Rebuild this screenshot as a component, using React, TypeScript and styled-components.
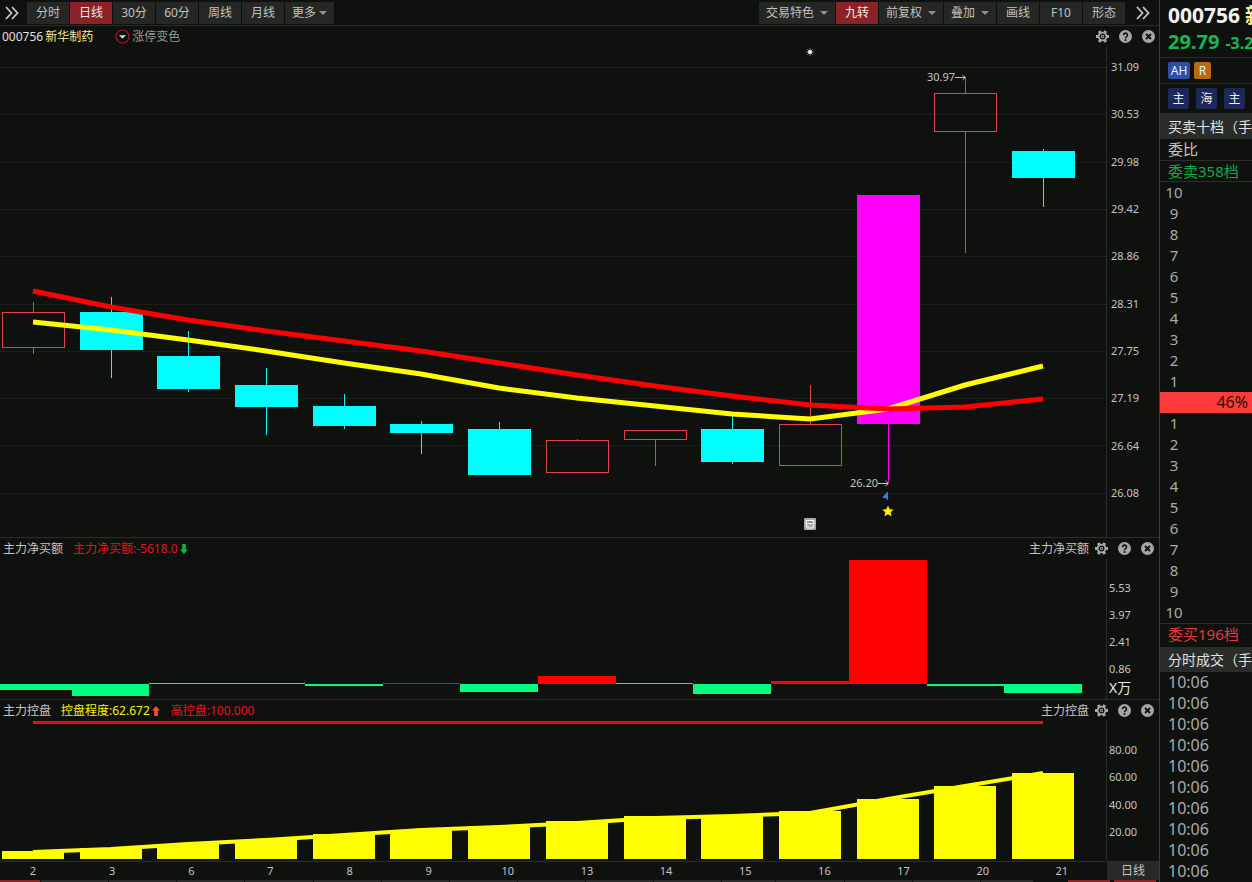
import React from "react";
import styled, { createGlobalStyle, css } from "styled-components";

const GlobalStyle = createGlobalStyle`
  * { box-sizing: border-box; }
  html, body { margin: 0; background: #0f110e; }
  body, button {
    font-family: "Noto Sans", "Noto Sans CJK SC", sans-serif;
    font-size: 12px;
    line-height: 16px;
  }
  button { border: 0; padding: 0; background: none; color: inherit; cursor: pointer; }
  ul, ol, h1, h2 { margin: 0; padding: 0; list-style: none; font-weight: 400; }
`;

const Page = styled.div`
  display: grid;
  grid-template-columns: minmax(0, 1fr) 93px;
  height: 100vh;
  overflow: hidden;
  background: #0f110e;
  color: #c4c4c4;
  white-space: nowrap;
`;

const Main = styled.main`
  display: flex;
  flex-direction: column;
  min-height: 0;
`;

/* ---------- toolbar ---------- */

const Toolbar = styled.nav`
  display: flex;
  justify-content: space-between;
  flex: none;
  height: 26px;
  padding: 2px 9px 1px 5px;
  border-bottom: 1px solid #2a2c2a;
`;

const TabGroup = styled.div<{ $gap: number }>`
  display: flex;
  align-items: center;
  gap: ${(p) => p.$gap}px;
`;

const Tabs = styled.div`
  display: flex;
  gap: 1px;
`;

const Tab = styled.button<{ $active?: boolean; $menu?: boolean }>`
  display: flex;
  align-items: center;
  justify-content: center;
  gap: ${(p) => (p.$menu ? 6 : 0)}px;
  min-width: 42px;
  height: 22px;
  padding: 0 ${(p) => (p.$menu ? 7 : 0)}px;
  background: ${(p) => (p.$active ? "#8a2327" : "#252725")};
  color: ${(p) => (p.$active ? "#f4e6e6" : "#c0c0c0")};
`;

const TightTab = styled(Tab)`
  gap: 3px;
`;

const Caret = styled.span`
  border: 4px solid transparent;
  border-top-color: #8f918f;
  border-bottom: 0;
`;

const MoreButton = styled.button`
  display: flex;
  color: #c8c8c8;
`;

/* ---------- panels ---------- */

const Panel = styled.section<{ $weight: number; $divided?: boolean }>`
  display: flex;
  flex-direction: column;
  flex: ${(p) => p.$weight} 1 0;
  min-height: 0;
  ${(p) => p.$divided && css`border-top: 1px solid #2a2c2a;`}
`;

const PanelHeader = styled.header<{ $right: number; $left: number }>`
  display: flex;
  align-items: center;
  flex: none;
  height: 21px;
  padding: 0 ${(p) => p.$right}px 0 ${(p) => p.$left}px;
`;

const Reading = styled.span<{ $color: string; $before?: number }>`
  display: flex;
  align-items: center;
  gap: 2px;
  margin-left: ${(p) => p.$before ?? 0}px;
  color: ${(p) => p.$color};
`;

const Tools = styled.div`
  display: flex;
  align-items: center;
  gap: 10px;
  margin-left: auto;
  color: #a6a6a6;
`;

const ToolTitle = styled.span`
  margin-right: -4px;
  color: #c4c4c4;
`;

const IconButton = styled.button`
  display: flex;
`;

const PanelBody = styled.div`
  display: flex;
  flex: 1;
  min-height: 0;
`;

const Plot = styled.div`
  position: relative;
  flex: 1;
  min-width: 0;
  min-height: 0;
`;

const Chart = styled.svg`
  display: block;
  width: 100%;
  height: 100%;
`;

const Axis = styled.div<{ $top: number; $bottom: number; $left: number }>`
  display: flex;
  flex-direction: column;
  justify-content: space-between;
  flex: none;
  width: 53px;
  padding: ${(p) => p.$top}px 0 ${(p) => p.$bottom}px ${(p) => p.$left}px;
  border-left: 1px solid #2a2c2a;
  font-size: 11px;
`;

const AxisUnit = styled.span`
  color: #e6e6e6;
  font-size: 14px;
  margin-top: -8px;
`;

const Marker = styled.span`
  position: absolute;
  display: flex;
  transform: translate(-50%, -50%);
`;

const PriceTag = styled.span`
  position: absolute;
  display: flex;
  align-items: center;
  font-size: 11px;
  transform: translateY(-50%);
`;

const DateRow = styled.div`
  display: flex;
  flex: none;
  height: 19px;
  border-top: 1px solid #2a2c2a;
  font-size: 11px;
`;

const Dates = styled.div`
  display: flex;
  justify-content: space-between;
  align-items: center;
  flex: 1;
  padding: 0 35px 0 23px;
`;

const DateLabel = styled.span`
  width: 20px;
  text-align: center;
`;

const PeriodButton = styled.button`
  width: 52px;
  background: #272927;
`;

const Strip = styled.div`
  display: flex;
  gap: 1px;
  flex: none;
  height: 2px;
`;

const StripItem = styled.span<{ $w: number; $tone: "red" | "grey" | "none" }>`
  flex: ${(p) => p.$w} 1 0;
  background: ${(p) => ({ red: "#8a2327", grey: "#2b2d2b", none: "transparent" })[p.$tone]};
`;

/* ---------- quote sidebar ---------- */

const Side = styled.aside`
  min-height: 0;
  overflow: hidden;
  border-left: 1px solid #3a3c3a;
`;

const Quote = styled.div`
  height: 58px;
  padding: 2px 0 0 8px;
  border-bottom: 1px solid #2a2c2a;
`;

const Code = styled.h1`
  display: flex;
  gap: 5px;
  color: #f2f2f2;
  font-size: 21px;
  font-weight: 700;
  line-height: 26px;
`;

const StockName = styled.span`
  color: #ffee9a;
`;

const Last = styled.div`
  display: flex;
  align-items: baseline;
  gap: 6px;
  color: #13b850;
  font-size: 20px;
  font-weight: 700;
  line-height: 28px;
`;

const Change = styled.span`
  font-size: 16px;
`;

const BadgeRow = styled.div<{ $h: number; $gap: number }>`
  display: flex;
  align-items: center;
  gap: ${(p) => p.$gap}px;
  height: ${(p) => p.$h}px;
  padding-left: 8px;
  border-bottom: 1px solid #2a2c2a;
`;

const Badge = styled.span<{ $bg: string; $w: number; $h: number }>`
  display: flex;
  flex: none;
  align-items: center;
  justify-content: center;
  width: ${(p) => p.$w}px;
  height: ${(p) => p.$h}px;
  border-radius: 2px;
  background: ${(p) => p.$bg};
  color: #eeeeee;
`;

const SideTitle = styled.h2`
  height: 25px;
  padding-left: 8px;
  background: #2a2c2a;
  color: #e2e2e2;
  font-size: 14px;
  line-height: 26px;
`;

const SideLine = styled.div<{ $color: string; $h: number; $rule?: "top" | "bottom" }>`
  height: ${(p) => p.$h}px;
  padding-left: 8px;
  color: ${(p) => p.$color};
  font-size: 15px;
  line-height: 21px;
  ${(p) => p.$rule && css`border-${p.$rule}: 1px solid #2a2c2a;`}
`;

const Levels = styled.ol`
  color: #a9aba9;
  font-size: 15px;
  line-height: 21px;
`;

const Level = styled.li`
  width: 28px;
  text-align: center;
`;

const Ratio = styled.div`
  height: 21px;
  padding-right: 4px;
  background: #ff3c3c;
  color: #2a0c0c;
  font-size: 16px;
  line-height: 21px;
  text-align: right;
`;

const Trades = styled.ul`
  padding-left: 8px;
  color: #a9aba9;
  font-size: 16px;
  line-height: 21px;
`;

/* ---------- icons ---------- */

const DoubleChevron = () => (
  <svg width="14" height="14" viewBox="0 0 14 14" fill="none" stroke="currentColor" strokeWidth="1.8">
    <path d="M1 1l5.500 6L1 13M7 1l5.500 6L7 13" />
  </svg>
);

const GearIcon = () => (
  <svg width="13" height="13" viewBox="0 0 13 13">
    <path
      stroke="currentColor"
      strokeWidth="3"
      d="M0 6.500h13M3.200 .9l6.600 11.200M9.800 .9L3.200 12.100"
    />
    <circle cx="6.500" cy="6.500" r="4.800" fill="currentColor" />
    <circle cx="6.500" cy="6.500" r="2.300" fill="currentColor" stroke="#0f110e" strokeWidth="1.300" />
    <circle cx="6.500" cy="6.500" r=".8" fill="#0f110e" />
  </svg>
);

const HelpIcon = () => (
  <svg width="13" height="13" viewBox="0 0 13 13" fill="none">
    <circle cx="6.500" cy="6.500" r="6.500" fill="currentColor" />
    <path d="M4.500 5.200a2 2 0 1 1 2.900 1.700q-.9.4-.9 1.300" stroke="#0f110e" strokeWidth="1.600" />
    <circle cx="6.500" cy="10" r="1" fill="#0f110e" />
  </svg>
);

const CloseIcon = () => (
  <svg width="13" height="13" viewBox="0 0 13 13">
    <circle cx="6.500" cy="6.500" r="6.500" fill="currentColor" />
    <path d="M4 4l5 5M9 4l-5 5" stroke="#0f110e" strokeWidth="1.900" />
  </svg>
);

const LegendIcon = () => (
  <svg width="15" height="15" viewBox="0 0 15 15">
    <circle cx="7.500" cy="7.500" r="6.500" fill="none" stroke="#a3162f" strokeWidth="1.200" />
    <path d="M4 6.200h7L7.500 9.600z" fill="#d8e6dc" />
  </svg>
);

const TrendArrow = ({ up }: { up?: boolean }) => (
  <svg width="8" height="10" viewBox="0 0 8 10">
    <path
      fill={up ? "#ff4a3c" : "#16b23e"}
      d={up ? "M4 0l4 4.500H5.800V10H2.200V4.500H0z" : "M4 10L0 5.500h2.200V0h3.600v5.500H8z"}
    />
  </svg>
);

const TagArrow = () => (
  <svg width="11" height="7" viewBox="0 0 11 7" fill="none" stroke="#c4c4c4">
    <path d="M0 3.500h10M7.500 1l2.800 2.500L7.500 6" />
  </svg>
);

const PanelTools = ({ title }: { title?: string }) => (
  <Tools>
    {title && <ToolTitle>{title}</ToolTitle>}
    <IconButton aria-label="设置"><GearIcon /></IconButton>
    <IconButton aria-label="帮助"><HelpIcon /></IconButton>
    <IconButton aria-label="关闭"><CloseIcon /></IconButton>
  </Tools>
);

/* ---------- data ---------- */

const W = 1106;
const BODY = 63;

type Kind = "up" | "down" | "limit";
/* left, body top, body bottom, high, low */
const candles: [number, number, number, number, number, Kind][] = [
  [2, 265, 301, 255, 307, "up"],
  [80, 265, 303, 250, 331, "down"],
  [157, 309, 342, 284, 345, "down"],
  [235, 338, 360, 321, 388, "down"],
  [313, 359, 379, 347, 382, "down"],
  [390, 377, 386, 374, 407, "down"],
  [468, 382, 428, 375, 428, "down"],
  [546, 393, 426, 392, 426, "up"],
  [624, 383, 393, 383, 419, "up"],
  [701, 382, 415, 369, 417, "down"],
  [779, 377, 419, 338, 377, "up"],
  [857, 148, 377, 148, 436, "limit"],
  [934, 46, 85, 30, 206, "up"],
  [1012, 104, 131, 102, 160, "down"],
];
const centres = candles.map((c) => c[0] + 31);

const slowMa = [244, 260, 273, 284, 294, 304, 316, 328, 339, 349, 358, 362, 360, 352];
const fastMa = [275, 283, 293, 304, 316, 327, 341, 351, 359, 367, 372, 362, 338, 319];
const toPoints = (ys: number[]) => ys.map((y, i) => `${centres[i]},${y}`).join(" ");

/* x edges of the flow bars and their signed heights */
const flowEdges = [0, 72, 149, 227, 305, 383, 460, 538, 616, 693, 771, 849, 927, 1004, 1082];
const flows = [-6, -12, -1, -1, -2, 1, -8, 8, -1, -10, 3, 124, -2, -9];

const control = [8, 11, 15, 19, 25, 29, 33, 38, 43, 44, 48, 60, 73, 86];
const controlLine = [131, 128, 123, 119, 114, 109, 106, 102, 97, 95, 92, 78, 65, 52];

const dates = [2, 3, 6, 7, 8, 9, 10, 13, 14, 15, 16, 17, 20, 21];
const prices = ["31.09", "30.53", "29.98", "29.42", "28.86", "28.31", "27.75", "27.19", "26.64", "26.08"];
const strip = [40, 67, 67, 67, 67, 67, 67, 67, 67, 67, 67, 53, 67, 67, 67, 52];

const PRICE_H = 490;
const at = (x: number, y: number) => ({ left: `${(x / W) * 100}%`, top: `${(y / PRICE_H) * 100}%` });
const endingAt = (x: number, y: number) => ({ right: `${100 - (x / W) * 100}%`, top: `${(y / PRICE_H) * 100}%` });

const colours: Record<Kind, string> = { up: "#e0424a", down: "#00ffff", limit: "#ff00ff" };

const Candle = ({ c }: { c: (typeof candles)[number] }) => {
  const [x, top, bottom, high, low, kind] = c;
  const mid = x + 31;
  return (
    <g fill={colours[kind]} shapeRendering="crispEdges">
      {top > high && <rect x={mid} y={high} width={1} height={top - high} />}
      {low > bottom && <rect x={mid} y={bottom} width={1} height={low - bottom} />}
      {kind === "up" ? (
        <rect x={x + 0.5} y={top + 0.5} width={BODY - 1} height={bottom - top - 1} fill="none" stroke={colours.up} />
      ) : (
        <rect x={x} y={top} width={BODY} height={bottom - top} />
      )}
    </g>
  );
};

export default function App() {
  return (
    <>
      <GlobalStyle />
      <Page>
        <Main>
          <Toolbar>
            <TabGroup $gap={8}>
              <MoreButton aria-label="展开"><DoubleChevron /></MoreButton>
              <Tabs>
                <Tab>分时</Tab>
                <Tab $active>日线</Tab>
                <Tab>30分</Tab>
                <Tab>60分</Tab>
                <Tab>周线</Tab>
                <Tab>月线</Tab>
                <TightTab $menu>更多<Caret /></TightTab>
              </Tabs>
            </TabGroup>
            <TabGroup $gap={11}>
              <Tabs>
                <Tab $menu>交易特色<Caret /></Tab>
                <Tab $active>九转</Tab>
                <Tab $menu>前复权<Caret /></Tab>
                <Tab $menu>叠加<Caret /></Tab>
                <Tab>画线</Tab>
                <Tab>F10</Tab>
                <Tab>形态</Tab>
              </Tabs>
              <MoreButton aria-label="更多工具"><DoubleChevron /></MoreButton>
            </TabGroup>
          </Toolbar>

          <Panel $weight={511}>
            <PanelHeader $left={2} $right={4}>
              <Reading $color="#e0e0e0">000756</Reading>
              <Reading $color="#f6ec9c" $before={2}>新华制药</Reading>
              <Reading $color="#969896" $before={22}><LegendIcon />涨停变色</Reading>
              <PanelTools />
            </PanelHeader>
            <PanelBody>
              <Plot>
                <Chart viewBox={`0 0 ${W} ${PRICE_H}`} preserveAspectRatio="none">
                  {prices.map((p, i) => (
                    <rect key={p} x={0} y={Math.round(20 + i * 47.3)} width={W} height={1} fill="#1b1d1b" />
                  ))}
                  {candles.map((c) => <Candle key={c[0]} c={c} />)}
                  <polyline points={toPoints(fastMa)} fill="none" stroke="#ffff00" strokeWidth={5} />
                  <polyline points={toPoints(slowMa)} fill="none" stroke="#ff0000" strokeWidth={5} />
                </Chart>
                <PriceTag style={endingAt(966, 30)}>30.97<TagArrow /></PriceTag>
                <PriceTag style={endingAt(889, 436)}>26.20<TagArrow /></PriceTag>
                <Marker style={at(810, 5)}>
                  <svg width="9" height="9" viewBox="0 0 9 9" stroke="#8d8d8d">
                    <path d="M4.500 0v9M0 4.500h9M1.500 1.500l6 6M7.500 1.500l-6 6" strokeWidth=".8" />
                    <circle cx="4.500" cy="4.500" r="2" fill="#f0f0f0" stroke="none" />
                  </svg>
                </Marker>
                <Marker style={at(810, 477)}>
                  <svg width="12" height="12" viewBox="0 0 12 12" fill="none">
                    <rect width="12" height="12" rx="1" fill="#a9a9a9" />
                    <path d="M2 2.500h8v3.500l-1 4H3zM3.500 5.500h4M4.500 8.500L9.500 4" stroke="#ffffff" />
                    <path d="M3.500 4h5M4.500 7h2" stroke="#777777" />
                  </svg>
                </Marker>
                <Marker style={at(885, 449)}>
                  <svg width="6" height="9" viewBox="0 0 6 9">
                    <path d="M6 0v9L3.700 6.800 0 6z" fill="#3f78e0" />
                  </svg>
                </Marker>
                <Marker style={at(888, 464)}>
                  <svg width="12" height="12" viewBox="0 0 12 12">
                    <path d="M6 .5l1.700 3.700 4 .4-3 2.700.9 4L6 9.200l-3.600 2.100.9-4-3-2.700 4-.4z" fill="#ffee00" />
                  </svg>
                </Marker>
              </Plot>
              <Axis $top={12} $bottom={36} $left={4}>
                {prices.map((p) => <span key={p}>{p}</span>)}
              </Axis>
            </PanelBody>
          </Panel>

          <Panel $weight={161} $divided>
            <PanelHeader $left={3} $right={5}>
              <Reading $color="#c4c4c4">主力净买额</Reading>
              <Reading $color="#e0161c" $before={10}>主力净买额:-5618.0<TrendArrow /></Reading>
              <PanelTools title="主力净买额" />
            </PanelHeader>
            <PanelBody>
              <Plot>
                <Chart viewBox={`0 0 ${W} 140`} preserveAspectRatio="none">
                  {flows.map((v, i) => (
                    <rect
                      key={i}
                      x={flowEdges[i]}
                      y={v > 0 ? 125 - v : v === -1 ? 124 : 125}
                      width={flowEdges[i + 1] - flowEdges[i]}
                      height={Math.abs(v)}
                      fill={v > 0 ? "#ff0000" : "#00ff7f"}
                      shapeRendering="crispEdges"
                    />
                  ))}
                </Chart>
              </Plot>
              <Axis $top={21} $bottom={3} $left={2}>
                {["5.53", "3.97", "2.41", "0.86"].map((t) => <span key={t}>{t}</span>)}
                <AxisUnit>X万</AxisUnit>
              </Axis>
            </PanelBody>
          </Panel>

          <Panel $weight={161} $divided>
            <PanelHeader $left={3} $right={5}>
              <Reading $color="#c4c4c4">主力控盘</Reading>
              <Reading $color="#f4f400" $before={10}>控盘程度:62.672<TrendArrow up /></Reading>
              <Reading $color="#e0161c" $before={11}>高控盘:100.000</Reading>
              <PanelTools title="主力控盘" />
            </PanelHeader>
            <PanelBody>
              <Plot>
                <Chart viewBox={`0 0 ${W} 140`} preserveAspectRatio="none">
                  <rect x={33} y={0} width={1010} height={3} fill="#f00a0a" />
                  {control.map((h, i) => (
                    <rect
                      key={i}
                      x={candles[i][0]}
                      y={138 - h}
                      width={BODY - 1}
                      height={h}
                      fill="#ffff00"
                      shapeRendering="crispEdges"
                    />
                  ))}
                  <polyline points={toPoints(controlLine)} fill="none" stroke="#ffff00" strokeWidth={4} />
                </Chart>
              </Plot>
              <Axis $top={21} $bottom={21} $left={2}>
                {["80.00", "60.00", "40.00", "20.00"].map((t) => <span key={t}>{t}</span>)}
              </Axis>
            </PanelBody>
          </Panel>

          <DateRow>
            <Dates>
              {dates.map((d) => <DateLabel key={d}>{d}</DateLabel>)}
            </Dates>
            <PeriodButton>日线</PeriodButton>
          </DateRow>
          <Strip>
            {strip.map((w, i) => <StripItem key={i} $w={w} $tone={i === 0 ? "red" : "grey"} />)}
            <StripItem $w={33} $tone="none" />
            <StripItem $w={42} $tone="red" />
            <StripItem $w={2} $tone="none" />
            <StripItem $w={42} $tone="red" />
            <StripItem $w={2} $tone="none" />
          </Strip>
        </Main>

        <Side>
          <Quote>
            <Code>000756<StockName>新华制药</StockName></Code>
            <Last>29.79<Change>-3.28%</Change></Last>
          </Quote>
          <BadgeRow $h={26} $gap={4}>
            <Badge $bg="#2a4fa3" $w={22} $h={17}>AH</Badge>
            <Badge $bg="#b86a10" $w={17} $h={17}>R</Badge>
          </BadgeRow>
          <BadgeRow $h={30} $gap={7}>
            <Badge $bg="#1b2858" $w={21} $h={21}>主</Badge>
            <Badge $bg="#1b2858" $w={21} $h={21}>海</Badge>
            <Badge $bg="#1b2858" $w={21} $h={21}>主</Badge>
          </BadgeRow>
          <SideTitle>买卖十档（手）</SideTitle>
          <SideLine $color="#c4c4c4" $h={22} $rule="bottom">委比</SideLine>
          <SideLine $color="#14a848" $h={21} $rule="bottom">委卖358档</SideLine>
          <Levels>
            {[10, 9, 8, 7, 6, 5, 4, 3, 2, 1].map((n) => <Level key={n}>{n}</Level>)}
          </Levels>
          <Ratio>46%</Ratio>
          <Levels>
            {[1, 2, 3, 4, 5, 6, 7, 8, 9, 10].map((n) => <Level key={n}>{n}</Level>)}
          </Levels>
          <SideLine $color="#e03c3c" $h={24} $rule="top">委买196档</SideLine>
          <SideTitle>分时成交（手）</SideTitle>
          <Trades>
            {Array.from({ length: 10 }, (_, i) => <li key={i}>10:06</li>)}
          </Trades>
        </Side>
      </Page>
    </>
  );
}
